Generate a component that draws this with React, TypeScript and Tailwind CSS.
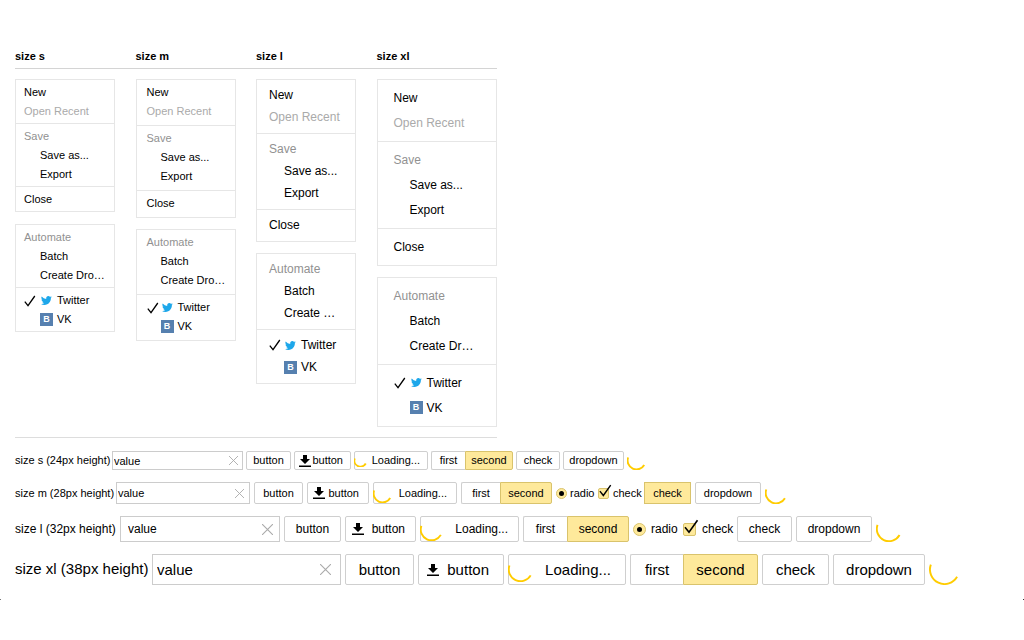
import { Fragment, useState } from "react";
import clsx from "clsx";

type Size = "s" | "m" | "l" | "xl";

const sizes: Size[] = ["s", "m", "l", "xl"];

const menuStyles = {
  s: {
    root: "w-[100px] text-[11px]",
    stack: "gap-3",
    group: "pt-[3px] pb-[2px]",
    item: "h-[19px] pl-2",
    indent: "w-4",
    create: "Create Dro…",
  },
  m: {
    root: "w-[100px] text-[11px]",
    stack: "gap-[11px]",
    group: "pt-[3px] pb-1",
    item: "h-[19px] pl-[10px]",
    indent: "w-[14px]",
    create: "Create Dro…",
  },
  l: {
    root: "w-[100px] text-xs",
    stack: "gap-[11px]",
    group: "pt-1 pb-[5px]",
    item: "h-[22px] pl-3",
    indent: "w-[15px]",
    create: "Create …",
  },
  xl: {
    root: "w-full text-xs",
    stack: "gap-[11px]",
    group: "pt-[5px] pb-[6px]",
    item: "h-[25px] pl-4",
    indent: "w-4",
    create: "Create Dr…",
  },
};

const rowStyles = {
  s: {
    height: "24px",
    row: "h-[19px] gap-[3px] text-[11px]",
    label: "w-[94px]",
    input: "w-[131px] pl-px pr-1",
    cross: "size-[9px]",
    button: "w-[45px]",
    icon: "w-[57px] pl-1 pr-[7px]",
    loading: "w-[74px] pr-[7px]",
    loader: "size-[13px]",
    first: "w-[34px]",
    second: "w-[48px]",
    check: "w-[44px]",
    dropdown: "w-[61px]",
    spinner: "size-[19px]",
    checked: false,
    box: null,
  },
  m: {
    height: "28px",
    row: "h-[22px] gap-1 text-[11px]",
    label: "w-[97px]",
    input: "w-[134px] pl-px pr-[5px]",
    cross: "size-[9px]",
    button: "w-[49px]",
    icon: "w-[62px] pl-[5px] pr-[9px]",
    loading: "w-[84px] pr-[9px]",
    loader: "size-[19px]",
    first: "w-[39px]",
    second: "w-[52px]",
    check: "w-[47px]",
    dropdown: "w-[66px]",
    spinner: "size-[22px]",
    checked: true,
    box: {
      radio: "w-[38px] gap-[3px]",
      check: "w-[42px] gap-1",
      size: "size-[11px]",
      tick: "size-[13px]",
    },
  },
  l: {
    height: "32px",
    row: "h-[26px] gap-1 text-xs",
    label: "w-[101px]",
    input: "w-[160px] pl-[7px] pr-[6px]",
    cross: "size-[11px]",
    button: "w-[57px]",
    icon: "w-[71px] pl-[6px] pr-[10px]",
    loading: "w-[99px] pr-[10px]",
    loader: "size-[23px]",
    first: "w-[44px]",
    second: "w-[62px]",
    check: "w-[55px]",
    dropdown: "w-[76px]",
    spinner: "size-[26px]",
    checked: false,
    box: {
      radio: "w-[46px] gap-[5px]",
      check: "w-[50px] gap-[6px]",
      size: "size-[13px]",
      tick: "size-[15px]",
    },
  },
  xl: {
    height: "38px",
    row: "h-[31px] gap-1 text-[15px]",
    label: "w-[133px]",
    input: "w-[189px] pl-1 pr-[9px]",
    cross: "size-[11px]",
    button: "w-[69px]",
    icon: "w-[86px] pl-2 pr-[14px]",
    loading: "w-[118px] pr-[14px]",
    loader: "size-[25px]",
    first: "w-[53px]",
    second: "w-[75px]",
    check: "w-[67px]",
    dropdown: "w-[92px]",
    spinner: "size-[31px]",
    checked: false,
    box: null,
  },
};

const buttonBase = "flex h-full shrink-0 items-center border leading-none";
const plain = "rounded-[2px] border-[#cfcfcf] bg-white";
const active = "border-[#d9c36c] bg-[#fee99b]";

function Tick({ className }: { className?: string }) {
  return (
    <svg viewBox="0 0 12 12" fill="none" stroke="#000" className={className}>
      <path d="M.8 6.600 4 10.600 10.800 1" strokeWidth="1.3" />
    </svg>
  );
}

function Bird() {
  return (
    <svg viewBox="0 0 24 24" fill="#1da7ea" className="size-[11px]">
      <path d="M23.6 4.8a9.6 9.6 0 0 1-2.8.8 4.9 4.9 0 0 0 2.1-2.7 9.7 9.7 0 0 1-3.1 1.2 4.8 4.8 0 0 0-8.3 4.4A13.8 13.8 0 0 1 1.6 3.3a4.8 4.8 0 0 0 1.5 6.5 4.8 4.8 0 0 1-2.2-.6 4.9 4.9 0 0 0 3.9 4.8 4.9 4.9 0 0 1-2.2.1 4.9 4.9 0 0 0 4.5 3.4A9.8 9.8 0 0 1 0 19.5 13.8 13.8 0 0 0 7.5 21.7c9.1 0 14-7.5 14-14v-.6a10 10 0 0 0 2.1-2.3z" />
    </svg>
  );
}

function Download() {
  return (
    <svg viewBox="0 0 12 12" className="size-3 shrink-0">
      <path d="M4 0h4v4h3L6 9 1 4h3zM0 10.400h12V12H0z" />
    </svg>
  );
}

function Spinner({ className }: { className: string }) {
  return (
    <svg
      viewBox="0 0 32 32"
      fill="none"
      stroke="#fc0"
      className={clsx("shrink-0", className)}
    >
      <path
        d="M1.900 10.900A15 15 0 0 0 29 23.500"
        strokeWidth="1.9"
        vectorEffect="non-scaling-stroke"
      />
    </svg>
  );
}

function Menu({ size }: { size: Size }) {
  const style = menuStyles[size];
  const item = clsx("flex w-full items-center whitespace-nowrap", style.item);
  const indent = <span className={clsx("shrink-0", style.indent)} />;
  const box = clsx(
    "divide-y divide-[#e6e6e6] border border-[#e6e6e6] bg-white",
    style.root
  );

  return (
    <div className={clsx("flex flex-col", style.stack)}>
      <div className={box}>
        <div className={style.group}>
          <button className={item}>New</button>
          <button className={clsx(item, "text-[#aaa]")} disabled>
            Open Recent
          </button>
        </div>
        <div className={style.group}>
          <div className={clsx(item, "text-[#919191]")}>Save</div>
          <button className={item}>{indent}Save as...</button>
          <button className={item}>{indent}Export</button>
        </div>
        <div className={style.group}>
          <button className={item}>Close</button>
        </div>
      </div>

      <div className={box}>
        <div className={style.group}>
          <div className={clsx(item, "text-[#919191]")}>Automate</div>
          <button className={item}>{indent}Batch</button>
          <button className={item}>
            {indent}
            {style.create}
          </button>
        </div>
        <div className={style.group}>
          <button className={item}>
            <span className={clsx("flex shrink-0", style.indent)}>
              <Tick className="size-3" />
            </span>
            <span className="mr-1 flex w-[13px] shrink-0 justify-center">
              <Bird />
            </span>
            Twitter
          </button>
          <button className={item}>
            {indent}
            <span className="mr-1 flex size-[13px] shrink-0 items-center justify-center bg-[#5680af] text-[9px] leading-none font-bold text-white">
              B
            </span>
            VK
          </button>
        </div>
      </div>
    </div>
  );
}

function ControlRow({ size }: { size: Size }) {
  const style = rowStyles[size];
  const [value, setValue] = useState("value");

  return (
    <div className={clsx("flex items-center whitespace-nowrap", style.row)}>
      <label htmlFor={`input-${size}`} className={clsx("shrink-0", style.label)}>
        size {size} ({style.height} height)
      </label>
      <div
        className={clsx(
          "flex h-full shrink-0 items-center border border-[#ccc]",
          style.input
        )}
      >
        <input
          id={`input-${size}`}
          className="h-full min-w-0 flex-1 outline-none"
          value={value}
          onChange={(e) => setValue(e.target.value)}
        />
        <button aria-label="Clear" onClick={() => setValue("")}>
          <svg viewBox="0 0 10 10" stroke="#aaa" className={style.cross}>
            <path d="M0 0 10 10M10 0 0 10" strokeWidth="1" />
          </svg>
        </button>
      </div>

      <button className={clsx(buttonBase, plain, "justify-center", style.button)}>
        button
      </button>
      <button className={clsx(buttonBase, plain, "justify-between", style.icon)}>
        <Download />
        button
      </button>
      <button
        className={clsx(buttonBase, plain, "justify-between", style.loading)}
      >
        <Spinner className={clsx("-ml-px", style.loader)} />
        Loading...
      </button>

      <div className="flex h-full shrink-0">
        <button
          className={clsx(
            buttonBase,
            "justify-center rounded-l-[2px] border-r-0 border-[#cfcfcf]",
            style.first
          )}
        >
          first
        </button>
        <button
          aria-pressed="true"
          className={clsx(
            buttonBase,
            active,
            "justify-center rounded-r-[2px]",
            style.second
          )}
        >
          second
        </button>
      </div>

      {style.box && (
        <Fragment>
          <label
            className={clsx("flex shrink-0 items-center", style.box.radio)}
          >
            <input
              type="radio"
              name={`radio-${size}`}
              defaultChecked
              className={clsx(
                "flex shrink-0 appearance-none items-center justify-center rounded-full border border-[#d9c36c] bg-[#fee99b] before:size-[5px] before:rounded-full before:bg-black",
                style.box.size
              )}
            />
            radio
          </label>
          <label
            className={clsx("flex shrink-0 items-center", style.box.check)}
          >
            <span className={clsx("relative shrink-0", style.box.size)}>
              <input
                type="checkbox"
                defaultChecked
                className="block size-full appearance-none rounded-[2px] border border-[#d9c36c] bg-[#fee99b]"
              />
              <Tick
                className={clsx(
                  "pointer-events-none absolute bottom-[2px] left-[1px]",
                  style.box.tick
                )}
              />
            </span>
            check
          </label>
        </Fragment>
      )}

      <button
        aria-pressed={style.checked}
        className={clsx(
          buttonBase,
          style.checked ? active : plain,
          "justify-center",
          style.check
        )}
      >
        check
      </button>
      <button
        aria-haspopup="menu"
        className={clsx(buttonBase, plain, "justify-center", style.dropdown)}
      >
        dropdown
      </button>
      <Spinner className={style.spinner} />
    </div>
  );
}

export default function App() {
  return (
    <div className="bg-white pt-12 font-['Liberation_Sans',Arial,sans-serif] text-black">
      <main className="px-[15px]">
        <section className="w-[482px] border-b border-[#ddd] pb-[10px]">
          <div className="grid grid-cols-4 border-b border-[#d4d4d4] pb-1">
            {sizes.map((size) => (
              <h2 key={size} className="text-[11px] leading-4 font-bold">
                size {size}
              </h2>
            ))}
          </div>
          <div className="mt-[10px] grid grid-cols-4 items-start">
            {sizes.map((size) => (
              <Menu key={size} size={size} />
            ))}
          </div>
        </section>

        <section className="mt-[13px] flex flex-col gap-3">
          {sizes.map((size) => (
            <ControlRow key={size} size={size} />
          ))}
        </section>
      </main>

      {/* window corners */}
      <div className="mt-[14px] flex justify-between">
        <span className="size-px bg-[#777]" />
        <span className="size-px bg-[#333]" />
      </div>
    </div>
  );
}
